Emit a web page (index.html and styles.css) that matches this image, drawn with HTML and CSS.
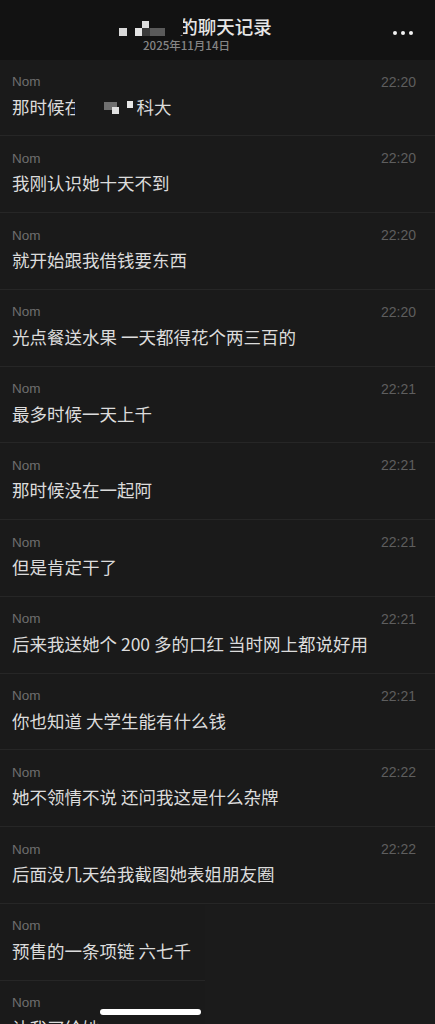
FILE: index.html
```html
<!DOCTYPE html>
<html lang="zh">
<head>
<meta charset="utf-8">
<link rel="stylesheet" href="styles.css">
</head>
<body>
<div class="page">
  <header class="topbar">
    <div class="title-wrap">
      <div class="title">
        <span class="mosaic-title">
          <i class="px p1"></i><i class="px p2"></i><i class="px p3"></i><i class="px p4"></i><i class="px p5"></i>
        </span>
        <span class="title-text"><span class="cut">的</span>聊天记录</span>
      </div>
      <div class="date">2025年11月14日</div>
    </div>
    <div class="more"><i></i><i></i><i></i></div>
  </header>
  <main class="list">
    <div class="row"><div class="meta"><span class="name">Nom</span><span class="time">22:20</span></div><div class="msg">那时候<span class="half">在</span><span class="gap"></span><span class="mz"><i class="m1"></i><i class="m2"></i><i class="m3"></i></span>科大</div></div>
    <div class="row"><div class="meta"><span class="name">Nom</span><span class="time">22:20</span></div><div class="msg">我刚认识她十天不到</div></div>
    <div class="row"><div class="meta"><span class="name">Nom</span><span class="time">22:20</span></div><div class="msg">就开始跟我借钱要东西</div></div>
    <div class="row"><div class="meta"><span class="name">Nom</span><span class="time">22:20</span></div><div class="msg">光点餐送水果 一天都得花个两三百的</div></div>
    <div class="row"><div class="meta"><span class="name">Nom</span><span class="time">22:21</span></div><div class="msg">最多时候一天上千</div></div>
    <div class="row"><div class="meta"><span class="name">Nom</span><span class="time">22:21</span></div><div class="msg">那时候没在一起阿</div></div>
    <div class="row"><div class="meta"><span class="name">Nom</span><span class="time">22:21</span></div><div class="msg">但是肯定干了</div></div>
    <div class="row"><div class="meta"><span class="name">Nom</span><span class="time">22:21</span></div><div class="msg">后来我送她个 200 多的口红 当时网上都说好用</div></div>
    <div class="row"><div class="meta"><span class="name">Nom</span><span class="time">22:21</span></div><div class="msg">你也知道 大学生能有什么钱</div></div>
    <div class="row"><div class="meta"><span class="name">Nom</span><span class="time">22:22</span></div><div class="msg">她不领情不说 还问我这是什么杂牌</div></div>
    <div class="row"><div class="meta"><span class="name">Nom</span><span class="time">22:22</span></div><div class="msg">后面没几天给我截图她表姐朋友圈</div></div>
    <div class="row"><div class="meta"><span class="name">Nom</span><span class="time">22:22</span></div><div class="msg">预售的一条项链 六七千</div></div>
    <div class="row"><div class="meta"><span class="name">Nom</span><span class="time">22:22</span></div><div class="msg">让我买给她</div></div>
  </main>
  <div class="mask"></div>
  <div class="home-bar"></div>
</div>
</body>
</html>
```

FILE: styles.css
```css
* { box-sizing: border-box; }
html, body {
  margin: 0;
  padding: 0;
  background: #1a1a1a;
}
body {
  font-family: "Noto Sans CJK SC", "Noto Sans", sans-serif;
  color: #dedede;
  overflow: hidden;
  height: 1024px;
}
.page {
  position: relative;
  width: 435px;
  height: 1024px;
  overflow: hidden;
}
.topbar {
  height: 59.5px;
  background: #121212;
  display: flex;
  justify-content: center;
  position: relative;
}
.title-wrap {
  display: flex;
  flex-direction: column;
  align-items: center;
  padding-top: 14px;
  margin-left: -44px;
}
.title {
  display: flex;
  align-items: center;
  height: 24px;
  font-size: 18.5px;
  font-weight: 500;
  color: #e6e6e6;
  line-height: 24px;
}
.mosaic-title {
  position: relative;
  width: 60px;
  height: 24px;
  display: block;
}
.px { position: absolute; display: block; }
.p1 { left: 0; top: 14px; width: 8px; height: 8px; background: #d8d8d8; }
.p2 { left: 16px; top: 14px; width: 7px; height: 8px; background: #e4e4e4; }
.p3 { left: 23px; top: 7px; width: 7px; height: 7px; background: #dcdcdc; }
.p4 { left: 23px; top: 14px; width: 8px; height: 8px; background: #3a3a3a; }
.p5 { left: 31px; top: 14px; width: 15px; height: 8px; background: #5a5a5a; }
.title-text { display: inline-block; position: relative; }
.cut {
  display: inline-block;
  position: relative;
}
.cut::before {
  content: "";
  position: absolute;
  left: -2px;
  top: 3px;
  width: 6px;
  height: 18px;
  background: #121212;
}
.date {
  font-family: "Noto Sans CJK SC", "Liberation Sans", sans-serif;
  font-size: 11.5px;
  font-weight: 500;
  color: #858585;
  line-height: 14px;
  margin-top: 0;
  margin-right: 18px;
}
.more {
  position: absolute;
  right: 22px;
  top: 31px;
  display: flex;
  gap: 4px;
}
.more i {
  display: block;
  width: 4px;
  height: 4px;
  border-radius: 50%;
  background: #f2f2f2;
}
.list {
  display: flex;
  flex-direction: column;
}
.row {
  height: 76.75px;
  padding: 13px 19px 0 12px;
  border-bottom: 1px solid #262626;
  position: relative;
}
.meta {
  display: flex;
  justify-content: space-between;
  align-items: center;
  height: 18px;
  font-family: "Liberation Sans", sans-serif;
  font-size: 13.5px;
}
.name { color: #6e6e6e; }
.time { color: #5e5e5e; font-size: 14px; }
.msg {
  margin-top: 3px;
  font-size: 17.5px;
  line-height: 26px;
  color: #dcdcdc;
  white-space: nowrap;
  display: flex;
  align-items: center;
}
.half {
  display: inline-block;
  width: 10px;
  overflow: hidden;
}
.gap { display: inline-block; width: 29px; }
.mz {
  position: relative;
  display: inline-block;
  width: 33px;
  height: 26px;
}
.mz i { position: absolute; display: block; }
.m1 { left: 0; top: 8px; width: 13px; height: 8px; background: #707070; }
.m2 { left: 8px; top: 13px; width: 7px; height: 7px; background: #e0e0e0; }
.m3 { left: 23px; top: 7px; width: 6px; height: 7px; background: #e6e6e6; }
.mask {
  position: absolute;
  left: 205px;
  top: 905px;
  width: 230px;
  height: 119px;
  background: #1b1b1b;
}
.home-bar {
  position: absolute;
  left: 100px;
  top: 1009px;
  width: 101px;
  height: 6px;
  border-radius: 3px;
  background: #ffffff;
}
```
